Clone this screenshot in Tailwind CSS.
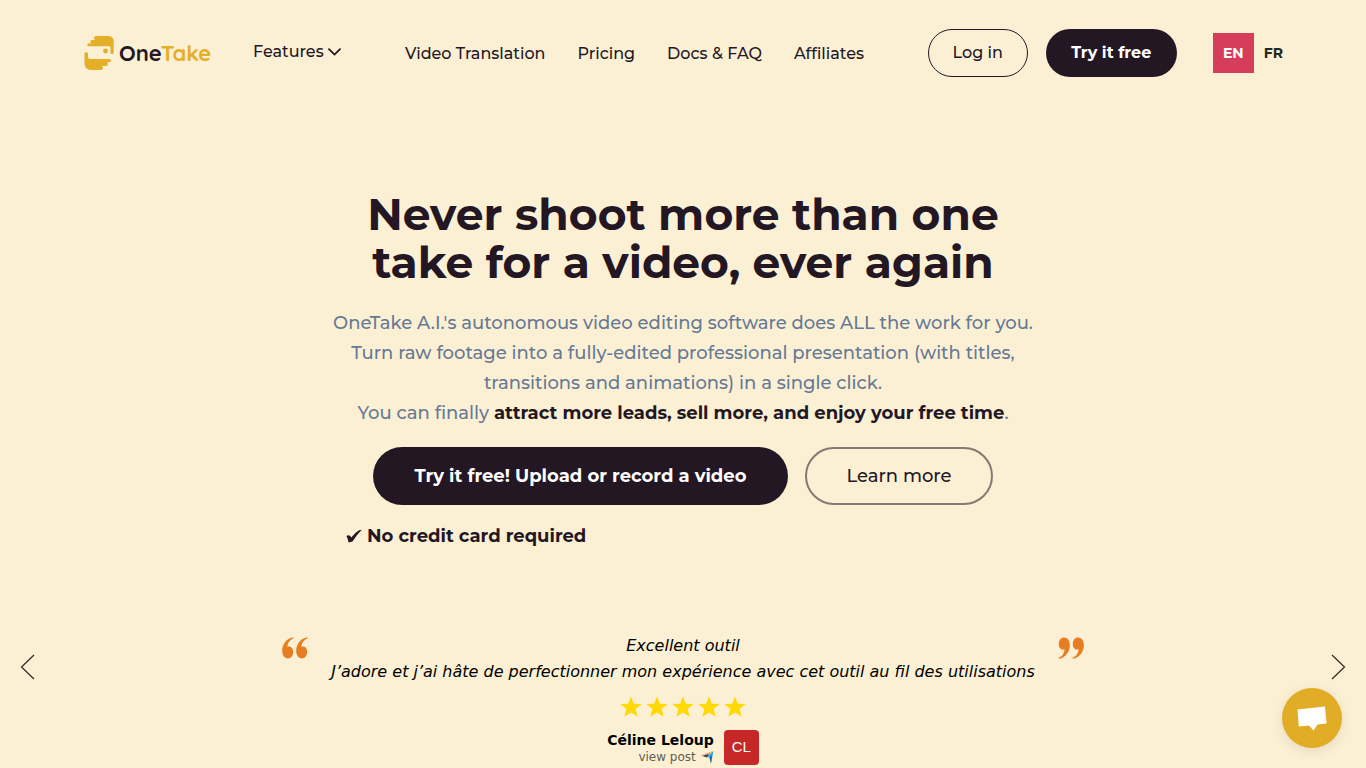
<!DOCTYPE html>
<html lang="en">
<head>
<meta charset="utf-8">
<meta name="viewport" content="width=device-width, initial-scale=1">
<title>OneTake</title>
<script src="https://cdn.jsdelivr.net/npm/@tailwindcss/browser@4"></script>
</head>
<body class="min-h-screen overflow-x-hidden bg-[#fcf0d4] font-['Montserrat','Inter',sans-serif] text-[#241724]">
<header class="flex h-[105px] items-center pr-[83px] pl-[84px]">
  <a href="#" class="flex w-[169px] shrink-0 items-center gap-[5px]" aria-label="OneTake home">
    <svg class="h-[36px] w-[30px]" viewBox="0 0 30 36" aria-hidden="true">
      <path fill="#e3ae28" d="M13 1H24Q29.700 1 29.700 7V17.500Q29.700 19 28 19Q26.500 19 26.500 17.500V13Q26.500 11.300 25 11.300H5Q3.300 11.300 3.300 9.800Q3.300 8.300 5 8.300H8Q6.300 8.300 6.300 6.600Q6.300 5 8 5H11.500Q10 5 10 3Q10 1 13 1Z"/>
      <path fill="#e3ae28" d="M2 17Q4 17 4 19V22Q4 24 6 24H25.500Q27 24 27 25.500Q27 27.300 25.500 27.300H22.500Q24 27.300 24 29Q24 31 22 31H18Q19 31.500 19 33Q19 35 16.500 35H7Q.5 35 .5 28V19Q.5 17 2 17Z"/>
      <circle cx="21.500" cy="16" r="2.400" fill="#e3ae28"/>
    </svg>
    <span class="font-['Quicksand','Lato',sans-serif] text-[22px] leading-[36px] font-bold">One<span class="text-[#e3ae28]">Take</span></span>
  </a>
  <nav class="flex flex-1 items-center text-base font-medium" aria-label="Main">
    <button class="flex w-[152px] items-center gap-1 pb-[2px]">Features
      <svg class="h-[8px] w-[13px]" viewBox="0 0 13 8" fill="none" stroke="currentColor" stroke-width="1.800" stroke-linecap="round" aria-hidden="true"><path d="M1 1.200L6.500 6.600L12 1.200"/></svg>
    </button>
    <div class="flex gap-8 pt-[2px]">
      <a href="#">Video Translation</a>
      <a href="#">Pricing</a>
      <a href="#">Docs &amp; FAQ</a>
      <a href="#">Affiliates</a>
    </div>
  </nav>
  <div class="flex items-center">
    <a href="#" class="flex h-12 w-[100px] items-center justify-center rounded-full border border-[#241724] text-base font-medium">Log in</a>
    <a href="#" class="ml-[18px] flex h-12 w-[131px] items-center justify-center rounded-full bg-[#241724] text-base font-bold text-white">Try it free</a>
    <a href="#" class="ml-9 flex h-10 w-[41px] items-center justify-center bg-[#d63d5b] text-sm font-bold text-white">EN</a>
    <a href="#" class="ml-[10px] text-sm font-bold text-[#222922]">FR</a>
  </div>
</header>

<main>
  <section class="mx-auto flex max-w-[720px] flex-col items-center pt-[85px] text-center">
    <h1 class="text-[44px] leading-[48px] font-bold">Never shoot more than one<br>take for a video, ever again</h1>
    <p class="mt-[22px] text-[18px] leading-[30px] font-medium text-[#677a94]">OneTake A.I.'s autonomous video editing software does ALL the work for you.<br>Turn raw footage into a fully-edited professional presentation (with titles,<br>transitions and animations) in a single click.<br>You can finally <strong class="font-bold text-[#241724]">attract more leads, sell more, and enjoy your free time</strong>.</p>
    <div class="mt-[19px] flex gap-[17px]">
      <a href="#" class="flex h-[58px] w-[415px] items-center justify-center rounded-full bg-[#241724] text-[18px] font-bold text-white">Try it free! Upload or record a video</a>
      <a href="#" class="flex h-[58px] w-[188px] items-center justify-center rounded-full border-2 border-[#857a70] text-[18px] font-medium">Learn more</a>
    </div>
    <p class="mt-4 flex w-full items-center gap-[5px] pl-[23px] text-[18px] leading-[30px] font-bold">
      <svg class="h-[15px] w-[16px]" viewBox="0 0 16 15" fill="currentColor" aria-hidden="true"><path d="M.5 7Q2.500 5.300 4.200 7L5.300 8.600Q9 3.500 13 1.200L15.800.8Q10.500 6 6.500 12.600L2.600 13.600Q2 10 .5 7Z"/></svg>
      No credit card required
    </p>
  </section>

  <section class="mt-[82px] flex items-start justify-between px-5 font-['DejaVu_Sans',sans-serif] text-black" aria-label="Testimonials">
    <button class="mt-[21px]" aria-label="Previous testimonial">
      <svg class="h-[26px] w-[15px]" viewBox="0 0 15 26" fill="none" stroke="#30271f" stroke-width="1.200" aria-hidden="true"><path d="M14 1L1.500 13L14 25"/></svg>
    </button>
    <figure class="flex w-[802px] flex-col items-center">
      <div class="flex w-full items-start justify-between">
        <svg class="mt-1 h-[22px] w-[26px] shrink-0" viewBox="0 0 26 22" fill="#e57d22" aria-hidden="true"><path id="quote-mark" d="M11.500 1.200Q6 3.500 5.300 9.800Q6 9.400 7 9.400C9.500 9.400 11.200 11.800 11.200 15C11.200 18.700 9 21.400 6 21.400C2.400 21.400.2 18.200.2 13.800C.2 7 4.500 1.500 11.200.2Z"/><use href="#quote-mark" x="14"/></svg>
        <blockquote class="text-center text-base leading-[26px] italic">Excellent outil<br>J’adore et j’ai hâte de perfectionner mon expérience avec cet outil au fil des utilisations</blockquote>
        <svg class="mt-1 h-[22px] w-[26px] shrink-0 rotate-180" viewBox="0 0 26 22" fill="#e57d22" aria-hidden="true"><use href="#quote-mark"/><use href="#quote-mark" x="14"/></svg>
      </div>
      <svg class="mt-[11px] h-[22px] w-[126px]" viewBox="0 0 126 22" fill="#ffd905" role="img" aria-label="5 out of 5 stars">
        <path id="star" d="M11 .3L13.900 7.700L21.700 8L15.600 13L17.700 20.800L11 16.500L4.300 20.800L6.400 13L.3 8L8.100 7.700Z"/>
        <use href="#star" x="26"/><use href="#star" x="52"/><use href="#star" x="78"/><use href="#star" x="104"/>
      </svg>
      <figcaption class="mt-[11px] flex items-center gap-[10px]">
        <div class="flex flex-col items-end pt-[2px]">
          <span class="text-sm leading-[18px] font-bold">Céline Leloup</span>
          <a href="#" class="flex items-center gap-1 text-xs leading-[17px] text-[#625c52]">view post
            <svg class="h-[13px] w-[14px]" viewBox="0 0 14 13" aria-hidden="true"><path fill="#efa578" d="M0 4.500L13.500 0L6.500 5.500Z"/><path fill="#2b3d4a" d="M2.500 5L9 3L7 6.500Z"/><path fill="#3aa5da" d="M6.500 6L13.500 0L11 12.500L9.500 6.500Z"/><path fill="#146b9c" d="M9.500 6.500L12 4L11 12.500Z"/></svg>
          </a>
        </div>
        <span class="flex h-[35px] w-[35px] items-center justify-center rounded bg-[#c62828] font-['Liberation_Sans',sans-serif] text-[15px] text-white">CL</span>
      </figcaption>
    </figure>
    <button class="mt-[21px]" aria-label="Next testimonial">
      <svg class="h-[26px] w-[15px]" viewBox="0 0 15 26" fill="none" stroke="#30271f" stroke-width="1.200" aria-hidden="true"><path d="M1 1L13.500 13L1 25"/></svg>
    </button>
  </section>
</main>

<button class="fixed right-6 bottom-5 flex h-[60px] w-[60px] items-center justify-center rounded-full bg-[#e1ad27] shadow-[0_3px_12px_rgba(0,0,0,0.1)]" aria-label="Open chat">
  <svg class="h-[26px] w-[30px]" viewBox="0 0 30 26" fill="#fff" aria-hidden="true"><path d="M.5 4.500L28 1.500L29.500 18.500L20.500 19.500L16.500 25.500L12 20.500L1.800 21.500Z"/></svg>
</button>
</body>
</html>
